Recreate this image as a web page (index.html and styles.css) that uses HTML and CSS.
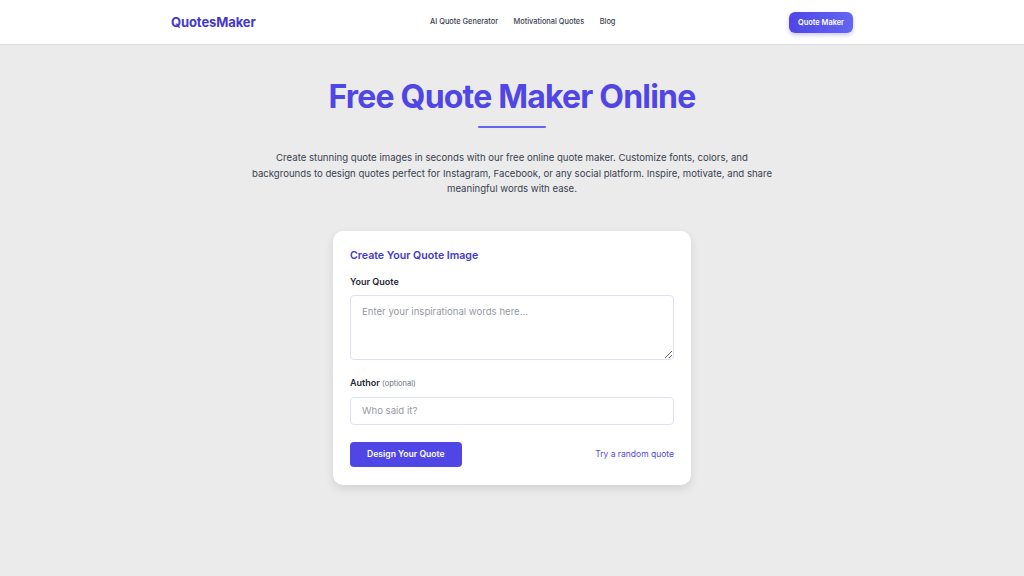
FILE: index.html
```html
<!DOCTYPE html>
<html lang="en">
<head>
	<meta charset="UTF-8" />
	<title>Free Quote Maker Online</title>
	<link rel="stylesheet" href="styles.css">
</head>
<body>
	<!-- header -->
	<div class="header">
		<div class="container nav-bar">
			<a class="logo" href="#">QuotesMaker</a>
			<ul class="nav">
				<li><a href="#">AI Quote Generator</a></li>
				<li><a href="#">Motivational Quotes</a></li>
				<li><a href="#">Blog</a></li>
			</ul>
			<a class="nav-btn" href="#">Quote Maker</a>
		</div>
	</div>
	<!-- END of header -->

	<div class="main">
		<h1 class="title">Free Quote Maker Online</h1>
		<div class="title-line"></div>
		<p class="intro">Create stunning quote images in seconds with our free online quote maker. Customize fonts, colors, and backgrounds to design quotes perfect for Instagram, Facebook, or any social platform. Inspire, motivate, and share meaningful words with ease.</p>

		<!-- form card -->
		<form class="card" action="" method="post">
			<h2 class="card-title">Create Your Quote Image</h2>
			<div class="field">
				<label for="quote" class="label">Your Quote</label>
				<textarea id="quote" class="textarea" placeholder="Enter your inspirational words here..."></textarea>
			</div>
			<div class="field">
				<label for="author" class="label">Author <span class="optional">(optional)</span></label>
				<input type="text" id="author" class="input" placeholder="Who said it?" />
			</div>
			<div class="actions">
				<button type="submit" class="submit">Design Your Quote</button>
				<a href="#" class="random">Try a random quote</a>
			</div>
		</form>
		<!-- END of form card -->
	</div>
</body>
</html>
```

FILE: styles.css
```css
html,
body,
div,
ul,
li,
h1,
h2,
p,
form {
	margin: 0;
	padding: 0;
	box-sizing: border-box;
}

body {
	font-family: Inter, "Liberation Sans", sans-serif;
	background-color: #ebebeb;
	color: #1f2937;
	min-height: 576px;
}

a {
	text-decoration: none;
}

.container {
	width: 682px;
	margin: 0 auto;
}

/* header */
.header {
	height: 45px;
	background-color: #fff;
	border-bottom: 1px solid #dcdcdc;
}

.nav-bar {
	height: 44px;
	display: flex;
	align-items: center;
}

.logo {
	font-size: 13px;
	font-weight: 700;
	color: #4338ca;
	letter-spacing: -0.1px;
	width: 200px;
}

.nav {
	list-style: none;
	display: flex;
	gap: 15.5px;
	margin-left: 59px;
	font-size: 7.4px;
	line-height: 10px;
}

.nav a {
	font-weight: 500;
	color: #374151;
}

.nav-btn {
	margin-left: auto;
	padding: 0 9px;
	height: 21px;
	line-height: 21px;
	border-radius: 6px;
	font-size: 7.4px;
	font-weight: 600;
	color: #fff;
	background: linear-gradient(90deg, #4f46e5, #6366f1);
	box-shadow: 0 2px 4px rgba(79, 70, 229, .3);
}

/* hero */
.main {
	padding-top: 33px;
	padding-bottom: 60px;
}

.title {
	font-size: 32px;
	line-height: 38px;
	font-weight: 700;
	letter-spacing: -0.8px;
	color: #4f46e5;
	text-align: center;
}

.title-line {
	width: 68px;
	height: 2px;
	margin: 10px auto 0;
	background-color: #6366f1;
	border-radius: 1px;
}

.intro {
	width: 524px;
	margin: 22px auto 0;
	font-size: 9.6px;
	line-height: 15.6px;
	color: #374151;
	text-align: center;
}

/* card */
.card {
	width: 358px;
	margin: 34px auto 0;
	padding: 19px 17px 18px;
	background-color: #fff;
	border-radius: 10px;
	box-shadow: 0 4px 10px rgba(0, 0, 0, .1);
}

.card-title {
	font-size: 10.6px;
	font-weight: 600;
	color: #4338ca;
	line-height: 12px;
	margin-bottom: 14px;
}

.field {
	margin-bottom: 17px;
}

.field:last-of-type {
	margin-bottom: 18px;
}

.label {
	display: block;
	font-size: 9px;
	font-weight: 600;
	color: #1f2937;
	line-height: 11px;
	margin-bottom: 8px;
}

.optional {
	font-size: 7.5px;
	font-weight: 400;
	color: #6b7280;
}

.textarea,
.input {
	display: block;
	width: 100%;
	box-sizing: border-box;
	border: 1px solid #e0e0f7;
	border-radius: 4px;
	font-family: Inter, "Liberation Sans", sans-serif;
	font-size: 9.6px;
	color: #1f2937;
	padding: 0 11px;
	outline: none;
}

.textarea {
	height: 65px;
	padding-top: 10px;
	resize: vertical;
}

.input {
	height: 28px;
}

.textarea::placeholder,
.input::placeholder {
	color: #969aa3;
}

.actions {
	display: flex;
	align-items: center;
	justify-content: space-between;
}

.submit {
	height: 25px;
	padding: 0 17px;
	border: none;
	border-radius: 4px;
	background-color: #4f46e5;
	color: #fff;
	font-family: Inter, "Liberation Sans", sans-serif;
	font-size: 8.6px;
	font-weight: 600;
	cursor: pointer;
}

.random {
	font-size: 8.5px;
	color: #4f46e5;
}
```
